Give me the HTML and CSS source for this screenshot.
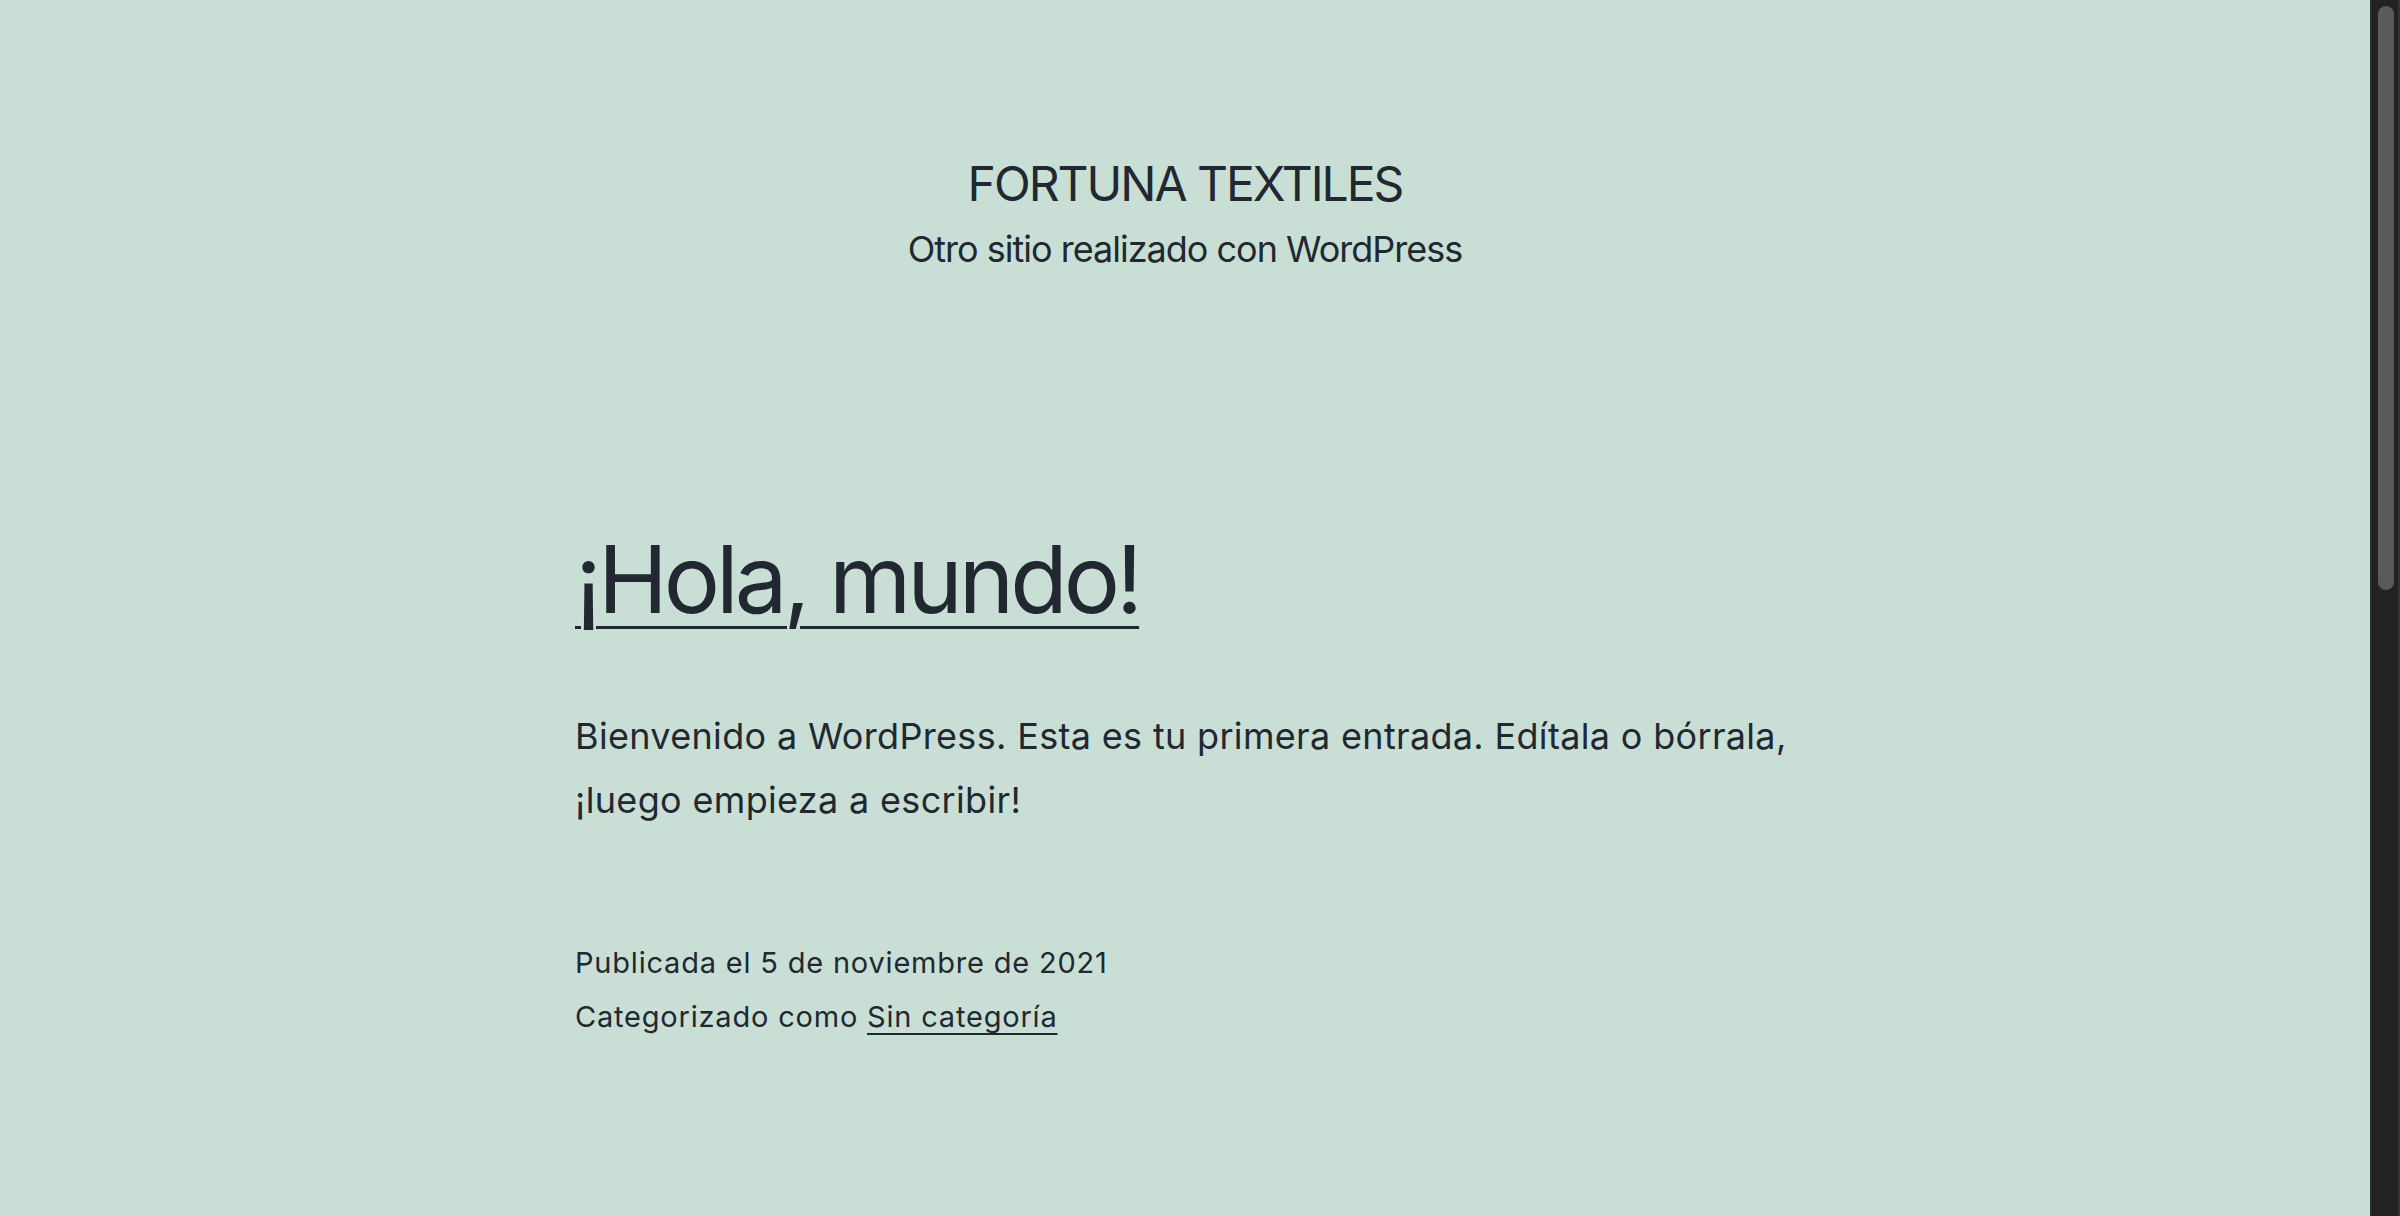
FILE: index.html
```html
<!DOCTYPE html>
<html lang="es">
<head>
<meta charset="utf-8">
<title>FORTUNA TEXTILES – Otro sitio realizado con WordPress</title>
<link rel="stylesheet" href="styles.css">
</head>
<body>
<div class="window">
  <div class="site">
    <header class="site-header">
      <h1 class="site-title">FORTUNA TEXTILES</h1>
      <p class="site-description">Otro sitio realizado con WordPress</p>
    </header>
    <main class="site-main">
      <article class="post">
        <h2 class="entry-title"><a href="#">¡Hola, mundo!</a></h2>
        <div class="entry-content">
          <p>Bienvenido a WordPress. Esta es tu primera entrada. Edítala o bórrala, ¡luego empieza a escribir!</p>
        </div>
        <footer class="entry-footer">
          <div class="posted-on">Publicada el 5 de noviembre de 2021</div>
          <div class="cat-links">Categorizado como <a href="#">Sin categoría</a></div>
        </footer>
      </article>
    </main>
  </div>
  <div class="scrollbar" aria-hidden="true">
    <div class="scroll-thumb"></div>
  </div>
</div>
</body>
</html>
```

FILE: styles.css
```css
html, body {
  margin: 0;
  padding: 0;
  height: 100%;
}

body {
  background: #c9dfd6;
  color: #222831;
  font-family: Inter, "Noto Sans", "Liberation Sans", sans-serif;
  overflow: hidden;
}

a {
  color: inherit;
}

.window {
  display: flex;
  height: 100vh;
}

.site {
  flex: 1;
  min-width: 0;
  overflow: hidden;
}

.site-header {
  padding-top: 153px;
  text-align: center;
}

.site-title {
  margin: 0;
  font-size: 48px;
  line-height: 62.4px;
  font-weight: 400;
  letter-spacing: -2px;
}

.site-description {
  margin: 9px 0 0;
  font-size: 36px;
  line-height: 50.4px;
  font-weight: 400;
  letter-spacing: -1px;
}

.site-main {
  max-width: 1220px;
  margin: 0 auto;
  padding-top: 243px;
}

.entry-title {
  margin: 0;
  font-size: 94px;
  line-height: 122px;
  font-weight: 400;
  letter-spacing: -4.05px;
}

.entry-title a {
  text-decoration-thickness: 3px;
  text-underline-offset: 13px;
}

.entry-content {
  margin-top: 64px;
}

.entry-content p {
  margin: 0;
  font-size: 36px;
  line-height: 64px;
  letter-spacing: 0.33px;
}

.entry-footer {
  margin-top: 104px;
  font-size: 29px;
  line-height: 54px;
  letter-spacing: 0.8px;
}

.entry-footer a {
  text-decoration-thickness: 2px;
  text-underline-offset: 6px;
}

.scrollbar {
  flex: none;
  width: 30px;
  box-sizing: border-box;
  height: 100vh;
  background: #222222;
  border-left: 2px solid #2c2c2c;
  border-right: 2px solid #333333;
  padding: 6px 4px 0 6px;
}

.scroll-thumb {
  height: 584px;
  border-radius: 8px;
  background: #5a5a5a;
}
```
